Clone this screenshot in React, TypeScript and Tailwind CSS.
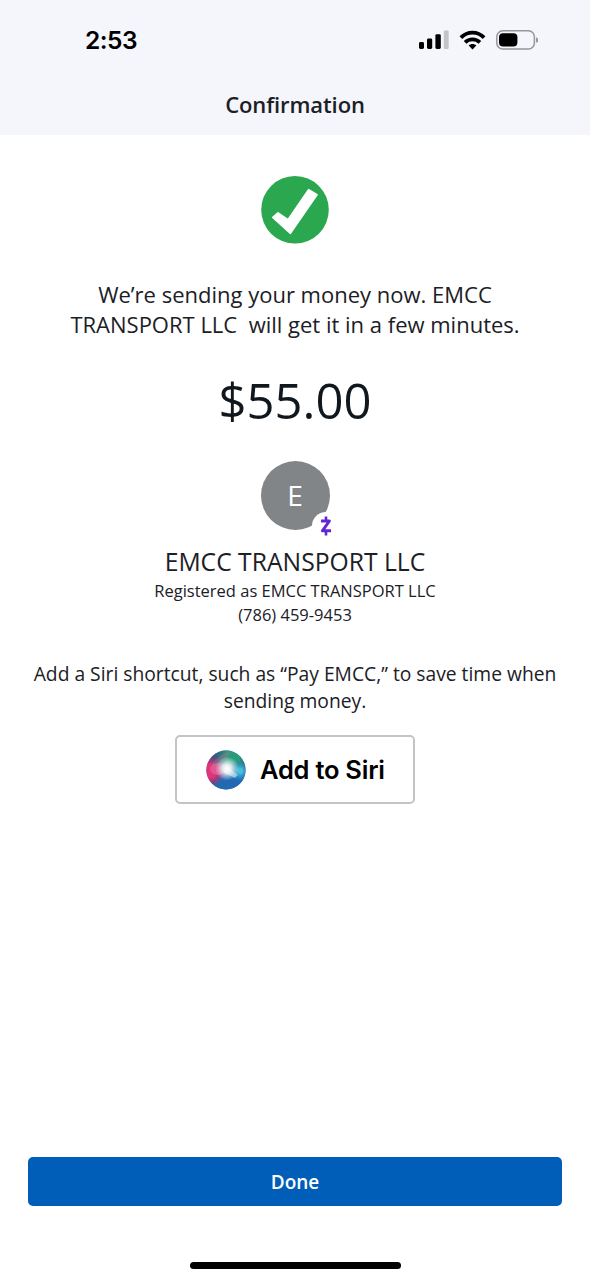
function SignalIcon() {
  return (
    <svg className="h-[20px] w-[30px]" viewBox="0 0 30 20">
      <rect x="0" y="12" width="5" height="7" rx="1.4" fill="#000" />
      <rect x="8" y="8.6" width="5.2" height="10.4" rx="1.4" fill="#000" />
      <rect x="16.4" y="4.2" width="5.4" height="14.8" rx="1.4" fill="#000" />
      <rect x="24.8" y="0.4" width="4.9" height="18.6" rx="1.2" fill="#c3c4c8" />
    </svg>
  )
}

function WifiIcon() {
  return (
    <svg className="h-[20px] w-[27px]" viewBox="0 0 27 20">
      <g fill="none" stroke="#000" strokeWidth="3.9">
        <path d="M1.9 7.6 C8.4 0.9 18.6 0.9 25.1 7.6" />
        <path d="M6.1 12.4 C10.3 8.4 16.7 8.4 20.9 12.4" />
      </g>
      <path d="M9.7 15.6 C11.8 13.6 15.2 13.6 17.3 15.6 L13.5 19.4 Z" fill="#000" />
    </svg>
  )
}

function BatteryIcon() {
  return (
    <svg className="h-[20px] w-[43px]" viewBox="0 0 43 20">
      <rect x="0.8" y="0.8" width="37.6" height="18.2" rx="6" fill="none" stroke="#96979b" strokeWidth="1.5" />
      <rect x="3" y="3.2" width="18.4" height="13.4" rx="4" fill="#000" />
      <path d="M40.2 7.2 C42.6 8 42.6 12 40.2 12.8 Z" fill="#85868a" />
    </svg>
  )
}

function CheckBadge() {
  return (
    <svg className="h-[68px] w-[68px]" viewBox="0 0 68 68">
      <circle cx="34" cy="33.8" r="33.8" fill="#2ba84f" />
      <path d="M11.8 41.4 L17 36.8 L27 43.6 L47.6 13.6 L56 18.8 L29.4 57.4 Z" fill="#fff" stroke="#fff" strokeWidth="1.6" strokeLinejoin="round" />
    </svg>
  )
}

function ZelleMark() {
  return (
    <svg className="h-[20px] w-[12px]" viewBox="0 0 12 20" fill="none" stroke="#6325d0">
      <path d="M1 5 H9.4 L2.4 14.8 H11" strokeWidth="3" strokeLinejoin="round" />
      <path d="M6 0.6 V4 M6 15.5 V19.4" strokeWidth="2.6" />
    </svg>
  )
}

function SiriOrb() {
  return (
    <svg className="h-[40px] w-[40px]" viewBox="0 0 40 40">
      <defs>
        <radialGradient id="glow">
          <stop offset="0" stopColor="#fff" />
          <stop offset="0.35" stopColor="#fff" stopOpacity="0.85" />
          <stop offset="1" stopColor="#fff" stopOpacity="0" />
        </radialGradient>
        <radialGradient id="pink">
          <stop offset="0.4" stopColor="#e0357a" />
          <stop offset="1" stopColor="#c9286f" stopOpacity="0" />
        </radialGradient>
        <radialGradient id="green">
          <stop offset="0.35" stopColor="#2a9c7e" />
          <stop offset="1" stopColor="#237f78" stopOpacity="0" />
        </radialGradient>
        <radialGradient id="cyan">
          <stop offset="0.2" stopColor="#45bfe0" />
          <stop offset="1" stopColor="#2384c8" stopOpacity="0" />
        </radialGradient>
        <clipPath id="orb"><circle cx="20" cy="20" r="19.6" /></clipPath>
      </defs>
      <g clipPath="url(#orb)">
        <rect width="40" height="40" fill="#37508a" />
        <ellipse cx="26" cy="36" rx="18" ry="13" fill="#1b70ba" opacity="0.8" />
        <circle cx="27" cy="6" r="20" fill="url(#green)" />
        <circle cx="4" cy="21" r="16" fill="url(#pink)" />
        <circle cx="34" cy="21" r="11" fill="url(#cyan)" />
        <ellipse cx="15" cy="9" rx="11" ry="3" fill="#8b7a85" opacity="0.5" transform="rotate(-38 15 9)" />
        <ellipse cx="12" cy="19" rx="8" ry="6" fill="#f2a0c0" opacity="0.3" />
        <path d="M20 16 L32 25 L29 28 L18 23 Z" fill="#e4f5fd" opacity="0.5" />
        <circle cx="21" cy="18.5" r="12" fill="url(#glow)" />
      </g>
    </svg>
  )
}

export default function App() {
  return (
    <div className="flex h-[1280px] w-[590px] flex-col bg-white font-['Open_Sans',sans-serif] text-[#1b2026]">
      <header className="flex h-[135px] shrink-0 flex-col bg-[#f5f6fb]">
        <div className="flex h-[80px] items-center justify-between pr-[51px] pl-[85px]">
          <span className="font-['Inter',sans-serif] text-[24.5px] font-semibold tracking-[-0.5px] text-black">2:53</span>
          <div className="flex items-center">
            <SignalIcon />
            <div className="ml-[10px]"><WifiIcon /></div>
            <div className="ml-[10px]"><BatteryIcon /></div>
          </div>
        </div>
        <h1 className="text-center text-[22px] leading-[48px] font-semibold tracking-[-0.1px]">Confirmation</h1>
      </header>

      <main className="flex flex-1 flex-col items-center pt-[41px] text-center whitespace-pre">
        <CheckBadge />
        <p className="mt-[35px] text-[22px] leading-[30px]">
          We’re sending your money now. EMCC{'\n'}TRANSPORT LLC  will get it in a few minutes.
        </p>
        <p className="mt-[26px] text-[49px] leading-[70px] text-[#10171d]">$55.00</p>

        <div className="relative mt-[26px] flex size-[69px] items-center justify-center rounded-full bg-[#828587] pb-px text-[28px] text-white">
          E
          <span className="absolute top-[51px] left-[51px] flex size-[28px] items-center justify-center rounded-full bg-white">
            <ZelleMark />
          </span>
        </div>
        <h2 className="mt-[16px] text-[24.7px] leading-[32px]">EMCC TRANSPORT LLC</h2>
        <p className="text-[16.5px] leading-[25px]">Registered as EMCC TRANSPORT LLC</p>
        <p className="text-[16.5px] leading-[24px]">(786) 459-9453</p>

        <p className="mt-[33px] text-[19.25px] leading-[27px]">
          Add a Siri shortcut, such as “Pay EMCC,” to save time when{'\n'}sending money.
        </p>
        <button className="mt-[21px] flex h-[69px] w-[240px] items-center gap-[14px] rounded-[5px] border-2 border-[#c3c4c5] pl-[29px] font-['Inter',sans-serif] text-[25.5px] font-semibold tracking-[-0.25px] text-black">
          <SiriOrb />
          <span className="pt-px">Add to Siri</span>
        </button>
      </main>

      <footer className="flex flex-col items-center px-[28px] pb-[11px]">
        <button className="h-[49px] w-full rounded-[5px] bg-[#005eb9] pt-px text-[19px] font-semibold text-white">Done</button>
        <div className="mt-[56px] h-[7px] w-[211px] rounded-full bg-black" />
      </footer>
    </div>
  )
}
